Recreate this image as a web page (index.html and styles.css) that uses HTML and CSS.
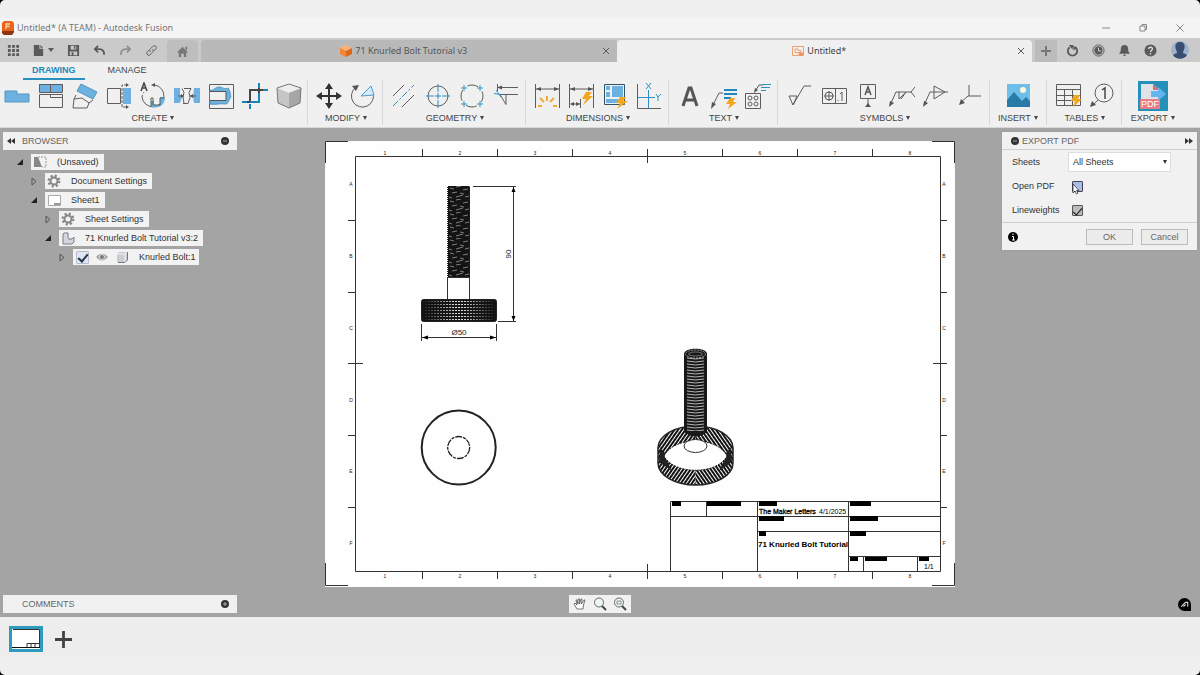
FILE: index.html
```html
<!DOCTYPE html>
<html lang="en">
<head>
<meta charset="utf-8">
<title>Untitled* (A TEAM) - Autodesk Fusion</title>
<link rel="stylesheet" href="styles.css">
</head>
<body>
<div class="app">
  <header class="titlebar">
    <svg class="logo" viewBox="0 0 12 14"><path d="M2 0h8l2 2v9l-2 3H2l-2-2V2z" fill="#e8641b"/><path d="M0 10h12v1l-2 3H2l-2-2z" fill="#8d3413"/><path d="M4 8V3h4M4 5.500h3.500" fill="none" stroke="#ffd2ae" stroke-width="1.300"/></svg>
    <span class="window-title">Untitled* (A TEAM) - Autodesk Fusion</span>
    <div class="window-buttons">
      <button aria-label="Minimize"><svg viewBox="0 0 10 10"><path d="M1 5h8"/></svg></button>
      <button aria-label="Restore"><svg viewBox="0 0 10 10"><path d="M2 3h5v5H2zM4 3V1.500h4.500v5H7"/></svg></button>
      <button aria-label="Close"><svg viewBox="0 0 10 10"><path d="M1.500 1.500l7 7M8.500 1.500l-7 7"/></svg></button>
    </div>
  </header>

  <nav class="tabbar">
    <div class="quick">
      <button aria-label="Data panel"><svg viewBox="0 0 14 14"><path d="M1 1h3v3H1zM5.500 1h3v3h-3zM10 1h3v3h-3zM1 5.500h3v3H1zM5.500 5.500h3v3h-3zM10 5.500h3v3h-3zM1 10h3v3H1zM5.500 10h3v3h-3zM10 10h3v3h-3z"/></svg></button>
      <button class="wide" aria-label="File"><svg viewBox="0 0 14 14"><path d="M2 1h6v4h4v8H2z"/><path d="M9 1l3 3H9z"/></svg><svg class="caret" viewBox="0 0 6 4"><path d="M0 0h6L3 4z"/></svg></button>
      <button aria-label="Save"><svg viewBox="0 0 14 14"><path fill-rule="evenodd" d="M1 1h12v12H1zM4 2v4h6V2zM3 8v4h8V8zM5 9h2v3H5z"/><path d="M7.500 2h1.500v3H7.500z"/></svg></button>
      <button aria-label="Undo"><svg viewBox="0 0 14 14"><path d="M2 5.500h5c3 0 5 2 5 6M5.500 2L2 5.500 5.500 9" class="s2"/></svg></button>
      <button class="dim" aria-label="Redo"><svg viewBox="0 0 14 14"><path d="M12 5.500H7c-3 0-5 2-5 6M8.500 2L12 5.500 8.500 9" class="s2"/></svg></button>
      <button aria-label="Link"><svg viewBox="0 0 14 14"><path d="M6 8.500C4.500 7 5 6 6 5l2.500-2.500c2-2 5 1 3 3L9.500 7.500M8 5.500C9.500 7 9 8 8 9l-2.500 2.500c-2 2-5-1-3-3L4.500 6.500" class="s1"/></svg></button>
    </div>
    <button class="home" aria-label="Home"><svg viewBox="0 0 14 14"><path d="M7 2l6 6h-2v5H8.500V9.500h-3V13H3V8H1zM10 2h2v4l-2-2z"/></svg></button>
    <div class="tab">
      <span class="tab-name"><svg viewBox="0 0 12 12"><path d="M6 0l6 3-6 3-6-3z" fill="#ffb273"/><path d="M0 3l6 3v6L0 9z" fill="#f58534"/><path d="M12 3L6 6v6l6-3z" fill="#dd671c"/></svg>71 Knurled Bolt Tutorial v3</span>
      <button aria-label="Close tab"><svg viewBox="0 0 10 10"><path d="M2 2l6 6M8 2L2 8" class="s1"/></svg></button>
    </div>
    <div class="tab active">
      <span class="tab-name"><svg viewBox="0 0 12 12" fill="none" stroke="#eda06f"><path d="M0.500 1.500h11v9H0.500zM3 4h3v1.500h3v2H3z"/><path d="M7 8h4v2H7z" fill="#e67b42"/></svg>Untitled*</span>
      <button aria-label="Close tab"><svg viewBox="0 0 10 10"><path d="M2 2l6 6M8 2L2 8" class="s1"/></svg></button>
    </div>
    <button class="newtab" aria-label="New tab"><svg viewBox="0 0 12 12"><path d="M6 1v10M1 6h10" class="s2"/></svg></button>
    <div class="account">
      <button aria-label="Extensions"><svg viewBox="0 0 14 14"><path d="M4 3.500a5 5 0 1 0 6 0" class="s2"/><path d="M3 1l5 0-1 5zM8 2l4 2-4 3z"/></svg></button>
      <button aria-label="Job status"><svg viewBox="0 0 14 14"><circle cx="7" cy="7" r="6" class="s1"/><circle cx="7" cy="7" r="4.500"/><path d="M7 4v3.500h3" stroke="#d5d5d5" fill="none"/></svg></button>
      <button aria-label="Notifications"><svg viewBox="0 0 14 14"><path d="M7 1c3 0 4 2 4 5 0 2 .5 3 2 4.500H1C2.500 9 3 8 3 6c0-3 1-5 4-5zM5.500 11.500h3c0 2-3 2-3 0z"/></svg></button>
      <button aria-label="Help"><svg viewBox="0 0 14 14"><circle cx="7" cy="7" r="6.500"/><path d="M5 5.500c0-3 4.500-2.500 4 0C9 7 7 7 7 8.500M7 9.800v1.500" fill="none" stroke="#ddd" stroke-width="1.500"/></svg></button>
      <button class="avatar" aria-label="Profile"><svg viewBox="0 0 18 18"><circle cx="9" cy="9" r="9" fill="#9fb3cc"/><path d="M9 1c4 0 5 3 4.500 6-.3 2-1.500 3-1.500 5 2 1 3 1 4 2-3 5-11 5-14 0 1-1 2-1 4-2 0-2-1.200-3-1.500-5C4 4 5 1 9 1z" fill="#394d70"/></svg></button>
    </div>
  </nav>

  <section class="ribbon">
    <div class="ribbon-tabs"><button class="current">DRAWING</button><button>MANAGE</button></div>
    <div class="groups">
      <div class="group">
        <div class="tools">
          <button aria-label="Base view"><svg viewBox="0 0 28 28"><path class="b bs" d="M2 9h12v3h12v8H2z"/></svg></button>
          <button aria-label="Projected view"><svg viewBox="0 0 28 28"><path class="b" d="M2 2h11v8H2zM14 2h12v8H14z"/><path class="l" d="M2.500 12.500h11v3h12v10h-23zM13.500 12.500h12v3M2.500 2.500h23v8h-23zM13.500 2.500v8"/></svg></button>
          <button aria-label="Auxiliary view"><svg viewBox="0 0 28 28"><path class="b bs" d="M10 2l16 8-4 7L6 9z"/><path class="l" d="M3 17l8-1 7 5-2 5H2zM5 13l-2 4M22 18l-4 3" /></svg></button>
          <button aria-label="Section view"><svg viewBox="0 0 28 28"><path class="l" d="M2.500 6.500h13v15h-13z"/><path class="b" d="M18 6h8v16h-8z"/><path class="l" d="M22 3h-5v22h5" stroke-dasharray="3 1"/><path class="f" d="M21 1l3 2-3 2zM21 23l3 2-3 2z"/></svg></button>
          <button aria-label="Detail view"><svg viewBox="0 0 28 28"><path class="l" d="M14 3h2a11 11 0 1 1-13 12"/><path class="l" stroke-dasharray="2 2" d="M3 15a12 12 0 0 1 2-5"/><path class="f" d="M16 1v4l-4-2z"/><path class="b" d="M12 19h3v4h6v-8h5c0 8-6 12-14 10z"/><path class="l" d="M12 25v-9h2v7h7v-7h4"/><path d="M2 9l3-8 3 8M3 6h4" fill="none" stroke="#444" stroke-width="1.500"/></svg></button>
          <button aria-label="Break view"><svg viewBox="0 0 28 28"><path class="b" d="M1 6h6v6l2 3-2 6H1zM21 6h6v15h-6l-1-6z"/><path class="l" d="M9 6.500l2 4-1 4 1 7M11 6.500h7l-2 4 1 5-2 6h-5M5 14h6M17 14h6"/><path class="f" d="M8 12l3 2-3 2zM20 12l-3 2 3 2z"/></svg></button>
          <button aria-label="Breakout section"><svg viewBox="0 0 28 28"><path class="l" d="M2.500 2.500h24v24h-24z"/><path class="b bs" d="M3 8c4 1 5-3 9-3s5 3 9 1c3 4 2 7 3 9-3 3-1 5-5 7-6-1-10 1-16 0z"/><path d="M3 9.500h16v9H3" fill="#f0f0f0" stroke="#555"/></svg></button>
          <button aria-label="Sketch"><svg viewBox="0 0 28 28" fill="none"><path d="M18 1v5M27 8h-5M1 20h6M9 27v-5" stroke="#1685b8" stroke-width="2"/><path d="M9 20V8h13M6 20h12V6" stroke="#444" stroke-width="2"/><path d="M9 20h9v-9" stroke="#1685b8" stroke-width="2"/></svg></button>
          <button aria-label="Blank body"><svg viewBox="0 0 28 28"><path d="M14 2l12 4-12 5L2 6z" fill="#eee"/><path d="M2 6l12 5v15L3 21z" fill="#c6c6c6"/><path d="M26 6l-12 5v15l11-5z" fill="#a6a6a6"/><path d="M14 2l12 4-1 15-11 5-11-5L2 6z" fill="none" stroke="#777"/></svg></button>
        </div>
        <button class="group-name">CREATE<i></i></button>
      </div>
      <div class="group">
        <div class="tools">
          <button aria-label="Move"><svg viewBox="0 0 28 28"><path d="M14 5v18M5 14h18" stroke="#333" stroke-width="2"/><path fill="#333" d="M14 1l4 6h-8zM14 27l4-6h-8zM1 14l6-4v8zM27 14l-6-4v8z"/></svg></button>
          <button aria-label="Rotate"><svg viewBox="0 0 28 28"><path class="l" d="M6 6a11 11 0 1 0 18 5"/><path class="f" d="M3 4l7-1-3 6z"/><path d="M12 14L22 4l3 9z" fill="#d5ebf7" stroke="#4a9fd0"/></svg></button>
        </div>
        <button class="group-name">MODIFY<i></i></button>
      </div>
      <div class="group">
        <div class="tools">
          <button aria-label="Centerline"><svg viewBox="0 0 28 28"><path class="l" d="M3 14L14 3M12 25l12-12"/><path class="c" stroke-dasharray="7 2 2 2" d="M3 24L24 3"/></svg></button>
          <button aria-label="Center mark"><svg viewBox="0 0 28 28"><circle class="l" cx="14" cy="14" r="10"/><path class="c" d="M14 2v8M14 18v8M2 14h8M18 14h8M11 14h6M14 11v6"/></svg></button>
          <button aria-label="Center mark pattern"><svg viewBox="0 0 28 28"><circle class="l" cx="14" cy="14" r="11" stroke-dasharray="11 6.280" stroke-dashoffset="5"/><path class="c" d="M6 3v6M3 6h6M22 3v6M19 6h6M6 19v6M3 22h6M22 19v6M19 22h6"/></svg></button>
          <button aria-label="Edge extension"><svg viewBox="0 0 28 28"><path class="l" d="M5.500 2v7M6 5.500h20M8 12.500h18M8 12.500l6 10v-10"/><path class="f" d="M5 5.500l5-2v4z"/><path class="c" d="M2 11.500l7 1M4 8l5 7"/></svg></button>
        </div>
        <button class="group-name">GEOMETRY<i></i></button>
      </div>
      <div class="group">
        <div class="tools">
          <button aria-label="Dimension"><svg viewBox="0 0 28 28"><path class="l" d="M2.500 2v24M26.500 2v24M3 7h23"/><path class="f" d="M3 7l5-2v4zM26 7l-5-2v4z"/><path class="o2" d="M5 24h4M7 16l4 4M14 14v5M21 16l-4 4M24 24h-4"/></svg></button>
          <button aria-label="Auto dimension"><svg viewBox="0 0 28 28"><path class="l" d="M2.500 2v24M26.500 2v24M3 7h23M13.500 17v9M4 22h9"/><path class="f" d="M3 7l5-2v4zM26 7l-5-2v4zM3 22l4-2v4zM13 22l-4-2v4z"/><path class="o" d="M19 10h6l-3 4h4L16 23l3-6h-4z"/></svg></button>
          <button aria-label="Auto balloon"><svg viewBox="0 0 28 28"><path d="M3.500 2.500h20v20h-20z" fill="#e8f2f8" stroke="#365364"/><path class="b" d="M5 4h4v4H5zM5 10h4v5H5zM11 4h11v11H11zM5 17h12v4H5z"/><path class="o" d="M19 15h6l-3 4h5l-11 8 3-6h-4z"/></svg></button>
          <button aria-label="Ordinate dimension"><svg viewBox="0 0 28 28"><path class="l" d="M2.500 2v24.500H26"/><path class="c" d="M13.500 8v18M3 15.500h17M11 1l5 6M16 1l-5 6M21 12l2 3 3-3M23 15v4"/></svg></button>
        </div>
        <button class="group-name">DIMENSIONS<i></i></button>
      </div>
      <div class="group">
        <div class="tools">
          <button aria-label="Text"><svg viewBox="0 0 28 28"><path d="M7 24l6-18h2l6 18M10 18h8" fill="none" stroke="#555" stroke-width="3"/></svg></button>
          <button aria-label="Leader text"><svg viewBox="0 0 28 28"><path class="l" d="M3 23L9 11h4"/><path class="f" d="M1 27l1-7 4 2z"/><path d="M14 8h13M14 12h13M14 16h7" stroke="#2188bb" stroke-width="2"/><path class="o" d="M20 16h5l-2 4h4l-9 7 2-5h-4z"/></svg></button>
          <button aria-label="Hole note"><svg viewBox="0 0 28 28"><path class="l" d="M1.500 11.500h15v15h-15zM12 8l3-5h4"/><path class="f" d="M10 11l1-5 3 2z"/><circle class="l" cx="6" cy="16" r="2"/><circle class="l" cx="12" cy="16" r="2"/><circle class="l" cx="6" cy="22" r="2"/><circle class="l" cx="12" cy="22" r="2"/><path class="c" d="M18 2.500h9M17 5.500h9M17 8.500h5"/></svg></button>
        </div>
        <button class="group-name">TEXT<i></i></button>
      </div>
      <div class="group symbols">
        <div class="tools">
          <button aria-label="Surface texture"><svg viewBox="0 0 28 28"><path class="l" d="M3 14h8l-4 9zM7 23L18 4h7"/></svg></button>
          <button aria-label="Feature control frame"><svg viewBox="0 0 28 28"><path class="l" d="M2.500 6.500h24v15h-24zM15.500 6.500v15M4 14h10M9 9v10M22 10v9M20 12l2-2M18 18v1"/><circle class="l" cx="9" cy="14" r="4"/></svg></button>
          <button aria-label="Datum identifier"><svg viewBox="0 0 28 28"><path class="l" d="M6.500 2.500h15v14h-15zM14 17v6"/><path d="M11 13l3-8 3 8M12 10h4" fill="none" stroke="#555" stroke-width="1.500"/><path class="f" d="M14 21l3 4h-6z"/></svg></button>
          <button aria-label="Weld symbol"><svg viewBox="0 0 28 28"><path class="l" d="M3 21L8 10h15M11 10v7l7-7M18 10l-5 7M27 5l-4 5 4 5"/><path class="f" d="M1 25l1-6 4 2z"/></svg></button>
          <button aria-label="Taper"><svg viewBox="0 0 28 28"><path class="l" d="M3 21L8 10h18M12 4v13l11-7z"/><path class="f" d="M1 25l1-6 4 2z"/></svg></button>
          <button aria-label="Bend"><svg viewBox="0 0 28 28"><path class="l" d="M5 20l7-6h13M13 3v11"/><path class="f" d="M3 23l2-6 4 4z"/></svg></button>
        </div>
        <button class="group-name">SYMBOLS<i></i></button>
      </div>
      <div class="group single">
        <div class="tools">
          <button aria-label="Insert image"><svg viewBox="0 0 28 28"><path d="M3 2h23v23H3z" fill="#6fbde9"/><circle cx="19" cy="8" r="3" fill="#fff8de"/><path d="M3 18l7-8 8 9 4-4 4 4v6H3z" fill="#287ba9"/></svg></button>
        </div>
        <button class="group-name">INSERT<i></i></button>
      </div>
      <div class="group">
        <div class="tools">
          <button aria-label="Table"><svg viewBox="0 0 28 28"><path class="l" d="M2.500 2.500h24v21h-24zM2.500 7.500h24M2.500 13.500h24M2.500 18.500h24M10.500 7.500v16M18.500 7.500v16"/><path class="o" d="M20 13h6l-2 4h4l-9 8 2-6h-4z"/></svg></button>
          <button aria-label="Balloon"><svg viewBox="0 0 28 28"><circle class="l" cx="16" cy="11" r="9"/><path d="M14 8l3-2v11" fill="none" stroke="#444" stroke-width="1.500"/><path class="l" d="M10 18l-5 5"/><path class="f" d="M2 25l2-6 4 4z"/></svg></button>
        </div>
        <button class="group-name">TABLES<i></i></button>
      </div>
      <div class="group export">
        <div class="tools">
          <button aria-label="Export PDF"><svg viewBox="0 0 30 30"><path d="M0 0h30v30H0z" fill="#2591b8"/><path d="M3 3h12l6 6v17H3z" fill="#dfe3e8"/><path d="M15 3l6 6h-6z" fill="#d36b7a"/><path d="M13 10h7V6l8 7-8 7v-4h-7z" fill="#62b5ed"/><path d="M2 18h20v10H2z" fill="#e97c86"/><text x="3" y="26" font-size="9" fill="#fff">PDF</text></svg></button>
        </div>
        <button class="group-name">EXPORT<i></i></button>
      </div>
    </div>
  </section>

  <main class="workspace">
    <aside class="browser">
      <div class="panel-bar"><svg class="arrows" viewBox="0 0 8 6"><path d="M4 0v6L0 3zM8 0v6L4 3z"/></svg><span>BROWSER</span><svg class="dot" viewBox="0 0 8 8"><circle cx="4" cy="4" r="4"/><path d="M2 4h4" stroke="#aaa"/></svg></div>
      <ul class="tree">
        <li><svg class="twisty" viewBox="0 0 6 7"><path d="M6 0v6H0z"/></svg><span class="node"><svg viewBox="0 0 14 14"><path d="M1 2h4l4 10H1z" fill="#888"/><path d="M5 2h8v10H9" fill="none" stroke="#999" stroke-dasharray="2 1"/></svg>(Unsaved)</span></li>
        <li class="d1"><svg class="twisty shut" viewBox="0 0 6 9"><path d="M1 1l4 3.500L1 8z"/></svg><span class="node"><svg viewBox="0 0 14 14"><circle cx="7" cy="7" r="5" fill="none" stroke="#888" stroke-width="3" stroke-dasharray="2 1.930"/><circle cx="7" cy="7" r="3.500" fill="none" stroke="#888" stroke-width="2"/></svg>Document Settings</span></li>
        <li class="d1"><svg class="twisty" viewBox="0 0 6 7"><path d="M6 0v6H0z"/></svg><span class="node"><svg viewBox="0 0 14 14"><path d="M1.500 2.500h12v10h-12z" fill="#fff" stroke="#aaa"/><path d="M7 10h6v2H7z" fill="#999"/></svg>Sheet1</span></li>
        <li class="d2"><svg class="twisty shut" viewBox="0 0 6 9"><path d="M1 1l4 3.500L1 8z"/></svg><span class="node"><svg viewBox="0 0 14 14"><circle cx="7" cy="7" r="5" fill="none" stroke="#888" stroke-width="3" stroke-dasharray="2 1.930"/><circle cx="7" cy="7" r="3.500" fill="none" stroke="#888" stroke-width="2"/></svg>Sheet Settings</span></li>
        <li class="d2"><svg class="twisty" viewBox="0 0 6 7"><path d="M6 0v6H0z"/></svg><span class="node"><svg viewBox="0 0 14 14"><path d="M2 3l1-1h4v5h6v4l-2 2H2z" fill="#d5d7df"/><path d="M2 3l1-1h4v5M2 3v10h9l2-2V6l-2 2H7" fill="none" stroke="#777b89"/></svg>71 Knurled Bolt Tutorial v3:2</span></li>
        <li class="d3"><svg class="twisty shut" viewBox="0 0 6 9"><path d="M1 1l4 3.500L1 8z"/></svg><span class="node body-node"><input type="checkbox" id="body1" checked><svg viewBox="0 0 14 14"><path d="M1 7c3-4.500 9-4.500 12 0-3 4.500-9 4.500-12 0z" fill="#aaa"/><circle cx="7" cy="7" r="2.500" fill="#777" stroke="#ddd"/></svg><svg viewBox="0 0 14 14"><path d="M2 4l2-2h8v8l-2 2H2z" fill="#c9ccd2"/><path d="M2 4h8v8M10 4l2-2" stroke="#f4f4f4" fill="none"/><path d="M3 12.500h7l2.500-2.500V2" stroke="#777" fill="none"/></svg><label for="body1">Knurled Bolt:1</label></span></li>
      </ul>
    </aside>

    <div class="canvas">
      <svg class="sheet" viewBox="325 141 630 446" role="img" aria-label="Drawing sheet">
        <defs>
          <pattern id="thread" x="448" y="186" width="22" height="13" patternUnits="userSpaceOnUse"><path d="M0 0h22v13H0z" fill="#141414"/><path d="M2 2l4 1M8 1l5-1M15 4l5-1M4 7l5-1M12 7l4 1M8 11l7-2M1 11l3 1M17 11l4-1" stroke="#aaa" stroke-width=".700" fill="none"/></pattern>
          <pattern id="knurl" x="422" y="300" width="3" height="3" patternUnits="userSpaceOnUse"><path d="M0 0h3v3H0z" fill="#181818"/><path d="M0 1h2v1H0z" fill="#e0e0e0"/></pattern>
          <pattern id="hatchR" width="3" height="3" patternUnits="userSpaceOnUse" patternTransform="rotate(35)"><path d="M0 0h2v3H0z" fill="#111"/></pattern>
          <pattern id="hatchL" width="3" height="3" patternUnits="userSpaceOnUse" patternTransform="rotate(-35)"><path d="M0 0h2v3H0z" fill="#111"/></pattern>
          <pattern id="coil" x="684" width="23" height="3" patternUnits="userSpaceOnUse"><path d="M3 1q8.500 2 17 0" fill="none" stroke="#ddd" stroke-width=".800"/></pattern>
          <linearGradient id="shade"><stop offset="0" stop-color="#111"/><stop offset=".45" stop-color="#111" stop-opacity="0"/><stop offset=".55" stop-color="#111" stop-opacity="0"/><stop offset="1" stop-color="#111"/></linearGradient>
        </defs>
        <path d="M325 141h630v446H325z" fill="#fefefe"/>
        <path class="ink" d="M348 141.500h-22.500V163M932 141.500h22.500V163M348 585.500h-22.500V563M932 585.500h22.500V563"/>
        <path class="frame" d="M355.500 156.500h585v415h-585z"/>
        <path class="ink" d="M422.500 149v7M497.500 149v7M572.500 149v7M647.500 149v14M722.500 149v7M797.500 149v7M872.500 149v7M422.500 572v7M497.500 572v7M572.500 572v7M647.500 564v15M722.500 572v7M797.500 572v7M872.500 572v7M348 220.500h7M348 292.500h7M348 363.500h15M348 435.500h7M348 507.500h7M941 220.500h6M941 292.500h6M933 363.500h14M941 435.500h6M941 507.500h6"/>
        <g class="zone">
          <text x="385" y="155">1</text><text x="460" y="155">2</text><text x="535" y="155">3</text><text x="610" y="155">4</text><text x="685" y="155">5</text><text x="760" y="155">6</text><text x="835" y="155">7</text><text x="910" y="155">8</text>
          <text x="385" y="578">1</text><text x="460" y="578">2</text><text x="535" y="578">3</text><text x="610" y="578">4</text><text x="685" y="578">5</text><text x="760" y="578">6</text><text x="835" y="578">7</text><text x="910" y="578">8</text>
          <text x="351" y="186">A</text><text x="351" y="258">B</text><text x="351" y="330">C</text><text x="351" y="402">D</text><text x="351" y="473">E</text><text x="351" y="545">F</text>
          <text x="944" y="186">A</text><text x="944" y="258">B</text><text x="944" y="330">C</text><text x="944" y="402">D</text><text x="944" y="473">E</text><text x="944" y="545">F</text>
        </g>
        <path d="M448 186h21l1 1v90h-22v-90z" fill="url(#thread)"/>
        <path d="M447.500 187v90M469.500 187v90" stroke="#222" stroke-dasharray="1 1"/>
        <path class="ink" d="M447.500 277v22M469.500 277v22M447 277.500h23"/>
        <rect x="421.500" y="299.500" width="75" height="22" rx="2" fill="url(#knurl)" stroke="#222"/>
        <rect x="422" y="300" width="74" height="21" fill="url(#shade)"/>
        <path class="ink" d="M473 186.500h43M498 321.500h18M513.500 187v134M421.500 324v17M496.500 324v17M422 337.500h75"/>
        <path d="M513.500 187l2 5h-4zM513.500 321l2-5h-4zM422 337.500l6-2v4zM496 337.500l-6-2v4z"/>
        <text class="dim" x="459" y="335">Ø50</text>
        <text class="dim" transform="translate(511 254) rotate(-90)">90</text>
        <circle cx="458.700" cy="447.500" r="37" fill="none" stroke="#222" stroke-width="2"/>
        <circle cx="458.700" cy="447.500" r="11" fill="none" stroke="#222" stroke-width="1.300" stroke-dasharray="7 1 3 1"/>
        <path d="M658 448a37.500 22 0 0 1 37.500-22v59a37.500 22 0 0 1-37.500-22z" fill="url(#hatchR)"/>
        <path d="M733 448a37.500 22 0 0 0-37.500-22v59a37.500 22 0 0 0 37.500-22z" fill="url(#hatchL)"/>
        <path d="M658 448a37.500 22 0 0 1 75 0v15a37.500 22 0 0 1-75 0z" fill="none" stroke="#222" stroke-width="1.500"/>
        <path d="M660 447l5 6 1 6 6 12-13-9zM731 447l-5 6-1 6-6 12 13-9z" fill="#222"/>
        <path d="M664 456c10-20 53-20 63 0-10 19-53 19-63 0z" fill="#fefefe" stroke="#222" stroke-dasharray="2 1"/>
        <ellipse cx="695.500" cy="446" rx="11.500" ry="6.500" fill="#fefefe" stroke="#333"/>
        <path d="M684 354c0-7 23-7 23 0v78q-11 9-23 0z" fill="#181818"/>
        <path d="M684 357h23v74h-23z" fill="url(#coil)"/>
        <ellipse cx="695.500" cy="354" rx="10" ry="4" fill="none" stroke="#ccc" stroke-width=".700" stroke-dasharray="2 1"/>
        <ellipse cx="695.500" cy="354" rx="7" ry="2" fill="none" stroke="#999" stroke-width=".700"/>
        <path class="frame" d="M670.500 571V501.500H940M670 516.500h270M706.500 501v15M757.500 501v70M848.500 501v70M757 531.500h183M848 556.500h92M863.500 556v15M917.500 556v15"/>
        <path d="M672 501h9v5h-9zM707 501h34v5h-34zM759 501h18v5h-18zM850 501h21v5h-21zM759 516h25v5h-25zM850 516h28v5h-28zM759 531h7v5h-7zM850 531h16v5h-16zM850 557h8v4h-8zM865 557h22v4h-22zM919 557h10v4h-10z"/>
        <text class="block heavy" x="759" y="514">The Maker Letters</text>
        <text class="block" x="819" y="514">4/1/2025</text>
        <text class="drawing-name" x="758" y="547">71 Knurled Bolt Tutorial</text>
        <text class="block" x="924" y="569">1/1</text>
      </svg>
    </div>

    <form class="export-panel">
      <div class="export-head"><svg class="dot" viewBox="0 0 8 8"><circle cx="4" cy="4" r="4"/><path d="M2 4h4" stroke="#aaa"/></svg><span>EXPORT PDF</span><svg class="arrows" viewBox="0 0 8 6"><path d="M0 0v6l4-3zM4 0v6l4-3z"/></svg></div>
      <div class="fields">
        <label for="sheets">Sheets</label><div class="pick"><select id="sheets"><option>All Sheets</option></select></div>
        <label for="openpdf">Open PDF</label><div class="check"><input type="checkbox" id="openpdf" class="hot"><svg class="cursor" viewBox="0 0 8 12"><path d="M1 1v9l2-2 1.500 3 1.500-1L4.500 7.500H7z" fill="#fff" stroke="#333" stroke-width=".800"/></svg></div>
        <label for="weights">Lineweights</label><div class="check"><input type="checkbox" id="weights" checked></div>
      </div>
      <div class="actions"><svg class="info" viewBox="0 0 10 10"><circle cx="5" cy="5" r="5"/><path d="M5 1.500v1.500M4 4.500h1.500V8M4 8h3" stroke="#fff" fill="none"/></svg><button type="button">OK</button><button type="button">Cancel</button></div>
    </form>

    <div class="dock">
      <div class="panel-bar comments"><span>COMMENTS</span><svg class="dot" viewBox="0 0 8 8"><circle cx="4" cy="4" r="4"/><path d="M2 4h4M4 2v4" stroke="#aaa"/></svg></div>
      <div class="navbar">
        <button aria-label="Pan"><svg viewBox="0 0 14 14"><path d="M4 12L1 7l1-1 2 2-1-5h1l1 4 0-5h1.500V7L8 2h1L8.500 7 11 3h1l-1.500 5L10 12z" fill="#fff" stroke="#555" stroke-width=".800"/></svg></button>
        <button aria-label="Zoom"><svg viewBox="0 0 14 14"><circle cx="6" cy="5.500" r="4.500" fill="#eef7f7" stroke="#666"/><path d="M9 9l4 4" stroke="#444" stroke-width="2"/></svg></button>
        <button aria-label="Zoom window"><svg viewBox="0 0 14 14"><circle cx="6" cy="5.500" r="4.500" fill="#eef7f7" stroke="#666"/><path d="M4 4h4v3H4z" fill="none" stroke="#888"/><path d="M9 9l4 4" stroke="#444" stroke-width="2"/></svg></button>
      </div>
      <button class="assistant" aria-label="Assistant"><svg viewBox="0 0 12 12"><path d="M6 0a6 6 0 0 1 6 6v6H6A6 6 0 0 1 6 0z"/><path d="M3 8l4-4h2v4M5 8l2-2" fill="none" stroke="#ddd"/></svg></button>
    </div>
  </main>

  <footer class="sheets">
    <button class="thumb" aria-label="Sheet1"><svg viewBox="0 0 28 20"><path d="M0 0h28v20H0z" fill="#fff"/><path d="M1 0.500h26.500V18M15 18v-3.500h12M19 15v3M23 15v3" fill="none" stroke="#333"/><path d="M0 18.500h28" stroke="#111"/></svg></button>
    <button class="add" aria-label="Add sheet"><svg viewBox="0 0 18 18"><path d="M9 0v18M0 9h18" stroke="#444" stroke-width="3"/></svg></button>
  </footer>
</div>
</body>
</html>
```
FILE: styles.css
```css
* { box-sizing: border-box; }
body {
  margin: 0;
  background: #000;
  color: #333;
  font: 9px/12px "Liberation Sans", Arial, sans-serif;
}
button {
  margin: 0;
  padding: 0;
  border: 0;
  background: none;
  color: inherit;
  font: inherit;
}
svg { display: block; }
.app {
  display: flex;
  flex-direction: column;
  min-height: 100vh;
  overflow: hidden;
  border-radius: 5px;
  background: #f0f0f0;
}

/* title bar */
.titlebar {
  display: flex;
  align-items: center;
  gap: 3px;
  height: 20px;
  margin-top: 18px;
  padding: 0 15px 0 2px;
  background: #f4f4f4;
}
.logo { width: 12px; height: 14px; }
.window-title {
  color: #777;
  font: 9px/12px "Noto Sans", sans-serif;
}
.window-buttons { display: flex; gap: 27px; margin-left: auto; }
.window-buttons svg {
  width: 10px;
  height: 10px;
  fill: none;
  stroke: #888;
}

/* document tabs */
.tabbar {
  display: flex;
  align-items: flex-end;
  height: 24px;
  background: #cacaca;
  fill: #5a5a5a;
}
.tabbar button { display: grid; place-items: center; }
.s1, .s2 { fill: none; stroke: #5a5a5a; stroke-width: 1; }
.s2 { stroke-width: 2; }
.quick { display: flex; height: 24px; padding-right: 3px; }
.quick button { width: 26px; }
.quick svg { width: 13px; height: 13px; }
.quick .wide { display: flex; align-items: center; justify-content: center; gap: 3px; width: 34px; }
.quick .wide .caret { width: 6px; height: 4px; }
.quick .dim { opacity: 0.5; }
.home {
  width: 31px;
  height: 22px;
  margin-right: 3px;
  border-radius: 4px 4px 0 0;
  background: #bebebe;
}
.home svg { width: 13px; height: 13px; fill: #777; }
.tab {
  display: flex;
  flex: 1;
  align-items: center;
  height: 22px;
  padding: 0 6px;
  border-radius: 4px 4px 0 0;
  background: #b9b9b9;
  color: #555;
}
.tab.active { background: #f0f0f0; color: #444; }
.tab-name {
  display: flex;
  flex: 1;
  align-items: center;
  justify-content: center;
  gap: 3px;
  font: 9px/12px "Noto Sans", sans-serif;
}
.tab-name svg { width: 12px; height: 12px; }
.tab button svg { width: 10px; height: 10px; }
.newtab { width: 22px; height: 22px; margin-left: 3px; background: #bcbcbc; }
.newtab svg { width: 12px; height: 12px; opacity: 0.7; }
.account { display: flex; align-items: center; height: 24px; padding: 0 6px 0 2px; }
.account button { width: 26px; }
.account svg { width: 13px; height: 13px; }
.account .avatar { width: 28px; margin-left: 3px; }
.account .avatar svg { width: 18px; height: 18px; }

/* ribbon */
.ribbon { padding-bottom: 2px; border-bottom: 1px solid #d8d8d8; color: #444; }
.ribbon-tabs { display: flex; gap: 14px; padding-left: 23px; }
.ribbon-tabs button {
  height: 18px;
  padding: 0 9px;
  border-bottom: 2px solid transparent;
}
.ribbon-tabs .current { border-color: #2a90bd; color: #2289b8; font-weight: bold; }
.groups { display: flex; }
.group {
  display: flex;
  flex-direction: column;
  align-items: center;
  padding: 0 2px 0 4px;
  border-left: 1px solid #d8d8d8;
}
.group:first-child { padding: 0 1px 0 0; border-left: 0; }
.group.symbols { padding: 0 2px 0 5px; }
.group.single { padding: 0 8px; }
.group.export { padding: 0 9px; }
.tools { display: flex; }
.tools button { display: grid; place-items: center; width: 34px; height: 31px; }
.tools svg { width: 28px; height: 28px; }
.export .tools svg { width: 30px; height: 30px; }
.group-name { display: flex; align-items: center; gap: 3px; height: 14px; }
.group-name i {
  border: 2px solid transparent;
  border-top: 4px solid #444;
  border-bottom: 0;
}
.l { fill: none; stroke: #5d5d5d; }
.f { fill: #555; }
.b { fill: #6cb1df; }
.bs { stroke: #5595c0; }
.c { fill: none; stroke: #318fc4; }
.o { fill: #f2a51e; }
.o2 { fill: none; stroke: #efab36; stroke-width: 2; }

/* workspace */
.workspace {
  display: grid;
  flex: 1;
  grid-template: 1fr auto / 234px 1fr 195px;
  padding: 4px 3px;
  background: #a4a4a4;
}
.panel-bar {
  display: flex;
  align-items: center;
  gap: 7px;
  width: 234px;
  height: 18px;
  padding: 0 8px 0 4px;
  background: #f1f1f1;
  color: #666;
}
.arrows { width: 8px; height: 6px; fill: #333; }
.dot { width: 8px; height: 8px; margin-left: auto; fill: #333; }
.tree {
  display: flex;
  flex-direction: column;
  gap: 3px;
  margin: 0;
  padding: 4px 0 0 14px;
  list-style: none;
}
.tree li { display: flex; align-items: center; gap: 8px; }
.d1 { padding-left: 14px; }
.d2 { padding-left: 28px; }
.d3 { padding-left: 42px; }
.twisty { width: 6px; height: 7px; fill: #222; }
.twisty.shut { height: 9px; fill: none; stroke: #555; }
.node {
  display: flex;
  align-items: center;
  gap: 10px;
  height: 16px;
  padding: 0 5px 0 2px;
  background: #f2f2f2;
}
.node svg { width: 14px; height: 14px; }
.body-node { gap: 6px; padding-right: 3px; }
.body-node label { padding-left: 4px; }
input[type="checkbox"] {
  display: grid;
  place-items: center;
  width: 11px;
  height: 11px;
  margin: 0;
  appearance: none;
  border: 1px solid #555;
  border-radius: 1px;
  background: #bbb;
}
input[type="checkbox"]:checked::after {
  content: "";
  width: 4px;
  height: 8px;
  border: solid #111;
  border-width: 0 1px 1px 0;
  transform: rotate(40deg);
}
.body-node input[type="checkbox"] {
  width: 13px;
  height: 13px;
  margin-left: 1px;
  border-color: #b8bdcc;
  background: #dfe5f4;
}
.body-node input[type="checkbox"]:checked::after { border-color: #234; border-width: 0 2px 2px 0; }
input[type="checkbox"].hot { border-color: #445; background: #a9bde8; }

.canvas { padding: 9px 47px 0 88px; }
.sheet { width: 100%; height: auto; font-family: "Liberation Sans", Arial, sans-serif; }
.ink, .frame { fill: none; stroke: #333; }
.zone { font-size: 5px; text-anchor: middle; fill: #222; }
.sheet .dim { font-size: 8px; text-anchor: middle; fill: #222; }
.block { font-size: 7px; }
.heavy { stroke: #000; stroke-width: 0.3px; }
.drawing-name { font-size: 8px; font-weight: bold; }

.export-panel {
  align-self: start;
  background: #f1f1f1;
  box-shadow: 0 0 1px #888;
}
.export-head {
  display: flex;
  align-items: center;
  gap: 3px;
  height: 18px;
  padding: 0 4px 0 9px;
  border-bottom: 1px solid #d0d0d0;
  color: #666;
}
.export-head .dot { margin: 0; }
.export-head .arrows { margin-left: auto; }
.fields {
  display: grid;
  grid-template-columns: 56px 103px;
  align-items: center;
  grid-auto-rows: 20px;
  row-gap: 4px;
  padding: 2px 10px;
}
.pick { position: relative; }
.pick::after {
  content: "";
  position: absolute;
  top: 8px;
  right: 4px;
  border: 2px solid transparent;
  border-top: 4px solid #333;
  border-bottom: 0;
}
.pick select {
  display: block;
  width: 100%;
  height: 20px;
  padding: 0 4px;
  appearance: none;
  border: 1px solid #ddd;
  border-radius: 0;
  background: #fff;
  color: #333;
  font: inherit;
}
.check { position: relative; padding-left: 4px; }
.cursor { position: absolute; top: 2px; left: 4px; width: 8px; height: 12px; }
.actions {
  display: flex;
  align-items: center;
  gap: 8px;
  padding: 6px 9px 5px 6px;
  border-top: 1px solid #d0d0d0;
}
.info { width: 10px; height: 10px; margin-right: auto; }
.actions button {
  width: 47px;
  height: 16px;
  border: 1px solid #bbb;
  background: #ececec;
  color: #666;
}

.dock {
  display: grid;
  grid-column: 1 / -1;
  grid-template-columns: 1fr auto 1fr;
  align-items: center;
}
.comments { padding-left: 19px; }
.navbar { display: flex; gap: 6px; padding: 2px 4px; background: #f1f1f1; }
.navbar svg { width: 14px; height: 14px; }
.assistant { justify-self: end; margin-right: 6px; }
.assistant svg { width: 13px; height: 13px; }

/* sheet strip */
.sheets {
  display: flex;
  align-items: center;
  gap: 12px;
  height: 39px;
  margin-bottom: 19px;
  padding: 5px 9px 0;
  background: #ededed;
}
.thumb { padding: 3px; background: #2e9abd; }
.thumb svg { width: 28px; height: 20px; }
.add svg { width: 17px; height: 17px; }
```
